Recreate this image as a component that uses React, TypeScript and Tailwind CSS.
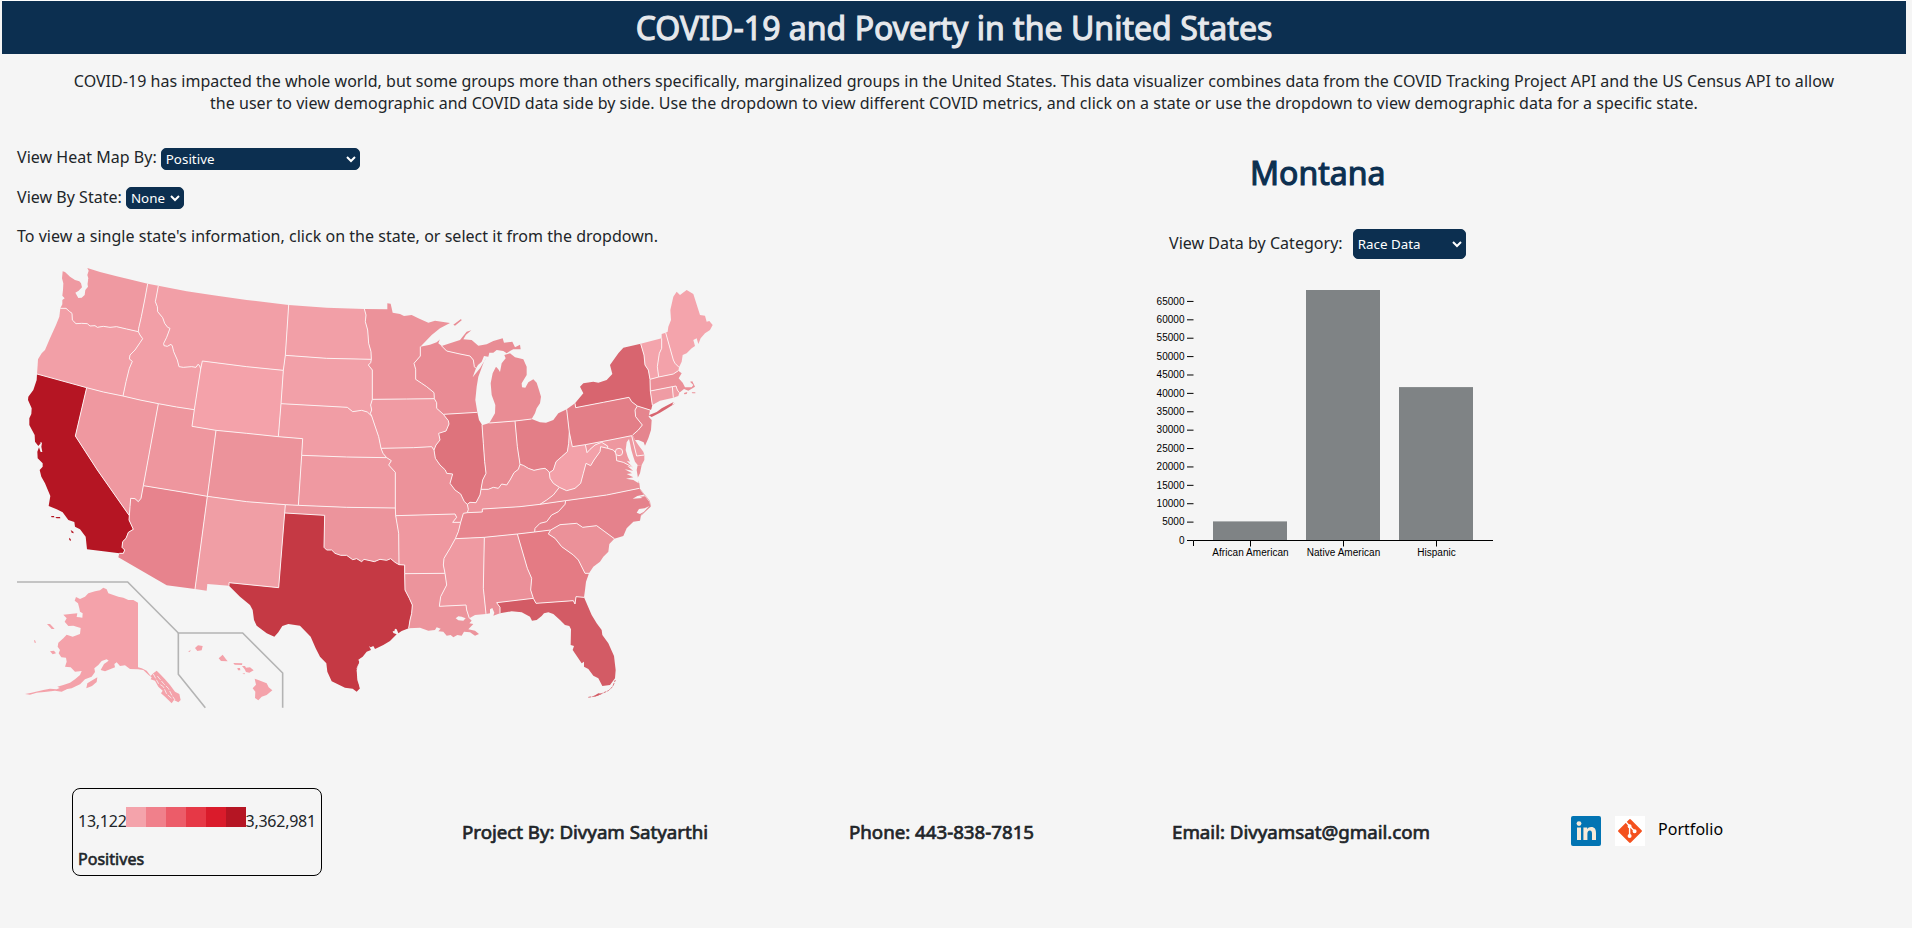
import React from "react";

/* Survey sheets: every sheet is drawn at three units per pixel from its own origin. */
const SHEETS: Record<string, [number, number]> = {
  W: [0, 250],
  N: [280, 250],
  SW: [0, 470],
  S: [220, 470],
  NE: [460, 270],
  SE: [440, 470],
};

/* Shared boundaries; each is written once and used by the states on both sides. */
const ARCS: Record<string, string> = {
  waid: "W 443,101 434,150 424,200 416,235 415,245",
  wac: "W 443,101 400,91 350,79 300,66 262,54 266,62 262,75 265,85 262,100 264,110 256,120 254,135 245,143 235,144 226,128 236,122 246,112 243,100 238,94 225,90 210,80 195,66 188,64 186,85 190,100 189,120 187,137 194,145 187,150 187,163 181,175",
  waor: "W 181,175 198,175 208,184 216,190 217,210 228,221 245,220 262,221 270,228 285,227 292,232 310,229 330,232 350,230 380,237 415,245",
  orid: "W 415,245 420,255 428,266 420,278 405,300 390,315 388,327 397,334 388,355 378,395 369,438",
  orc: "W 181,175 178,200 168,225 150,265 135,300 125,310 114,328 113,345 111,372",
  orca: "W 111,372 180,391 260,413",
  ornv: "W 260,413 310,426 369,438",
  idnv: "W 369,438 420,450 475,461",
  idut: "W 475,461 530,471 583,479",
  idwy: "W 583,479 592,420 602,357",
  idmt: "W 475,107 470,135 466,155 472,170 473,185 488,203 494,220 503,232 510,235 500,262 491,280 492,287 502,289 513,283 517,288 521,305 532,330 537,350 550,352 575,350 588,352 594,343 599,347 602,357",
  idn: "W 443,101 475,107",
  mtn: "W 475,107 560,124 640,136 740,150 866,165",
  mtwy: "W 602,357 607,333 740,350 850,361",
  mtnd: "W 866,165 861,240 856,316",
  mtsd: "W 856,316 850,361",
  wysd: "W 850,361 843,461",
  wyne: "W 843,461 835,560",
  wyut: "W 583,479 576,529 648,541",
  wyco: "W 648,541 740,550 835,560",
  neco: "W 835,560 908,566 905,616",
  ksco: "W 905,616 895,766",
  utco: "W 648,541 622,739",
  nvut: "W 475,461 430,707",
  utaz: "W 430,707 540,725 622,739",
  nvaz: "W 430,707 423,745 415,755 405,746 392,745 390,770 388,797",
  canv: "W 260,413 226,558 292,660 388,797",
  caaz: "W 388,797 387,810 394,825 400,838 385,847 378,865 368,875 366,892 374,900 370,910 358,910",
  cac: "W 111,372 110,390 100,420 85,440 84,450 95,475 94,492 88,505 88,525 104,555 105,575 115,588 122,580 121,576 126,578 124,590 127,606 122,606 117,592 112,605 113,625 128,640 128,650 119,660 124,680 135,700 151,738 146,768 170,778 188,787 205,810 223,816 225,830 240,838 257,860 261,898 310,904 358,910",
  azs: "SW 358,250 355,262 500,346 585,357",
  aznm: "W 622,739 585,1017",
  nms: "SW 585,357 620,362 622,342 687,347",
  nmtx: "SW 687,347 687,338 836,353 854,129",
  nmok: "SW 854,129 856,104",
  conm: "SW 622,79 740,95 856,104",
  cook: "SW 856,104 895,106",
  ksok: "S 235,106 380,112 526,114",
  oktx: "S 195,129 314,136 312,232 320,240 335,240 345,250 362,256 380,256 398,269 410,266 425,275 432,268 450,272 463,275 480,268 500,271 512,266 525,277 537,284",
  okar: "S 527,137 536,190 537,284",
  okmo: "S 526,114 527,137",
  txar: "S 537,284 554,285 554,311",
  txla: "S 554,311 555,360 568,385 577,405 575,430 570,450 566,475",
  txc: "S 566,475 545,483 535,490 530,478 525,476 523,484 518,483 520,489 530,493 510,513 490,525 465,537 460,528 452,532 447,528 453,540 440,545 428,560 415,569 418,576 410,600 412,630 420,655 410,665 398,656 375,653 335,634 322,605 319,580 300,560 287,535 272,500 240,467 205,462 187,468 175,487 163,500 140,490 110,467 102,450 98,420 90,405 60,380 27,347",
  ndsd: "N 16,316 140,325 274,328",
  ndn: "N 26,165 140,173 253,177",
  ndmn: "N 253,177 258,195 256,215 263,240 266,280 273,305 274,328",
  sdmn: "N 274,328 272,338 265,345 277,360 277,448",
  sdia: "N 277,448 272,465 275,480 271,490 275,498",
  sdne: "N 3,461 202,472 218,485 245,481 262,486 275,498",
  neia: "N 275,498 284,525 296,560 303,595",
  nemo: "N 303,595 309,610 320,623",
  neks: "N 65,616 200,621 320,623",
  ksmo: "N 320,623 334,632 326,645 346,667 346,774",
  iamo: "N 303,595 400,593 455,590 462,600",
  mnia: "N 277,448 380,447 463,446",
  mnwi: "N 421,290 421,318 402,340 407,358 407,388 425,400 440,410 462,428 463,446",
  wiia: "N 463,446 470,458 470,475 490,493",
  iail: "N 490,493 505,512 507,522 498,543 476,550 480,570 468,585 462,600",
  moil: "N 462,600 466,625 480,645 496,660 500,670 518,672 510,700 525,720 542,732 553,755 562,763",
  moky: "S 742,103 745,118 742,128",
  motn: "S 742,128 730,130 722,157",
  moar: "S 527,137 705,132 710,142 698,157 722,157",
  artn: "S 722,157 715,185 706,206",
  arms: "S 706,206 690,235 672,265 670,285 675,310",
  lams: "S 675,310 680,345 662,380 658,409 738,405 740,420 748,445",
  arla: "S 554,311 675,310",
  tnms: "S 706,206 793,202",
  msal: "S 793,202 790,355 798,432",
  tnal: "S 793,202 892,192",
  tnga: "SE 232,192 284,186",
  tnnc: "SE 284,186 285,175 300,160 320,155 335,135 355,125 375,103 377,92",
  gan: "SE 284,186 332,180",
  kytn: "S 742,128 787,126 787,117 900,110 960,103",
  tnva: "SE 300,103 377,92",
  vanc: "SE 377,92 500,75 598,55",
  mnn: "N 253,177 322,178 322,160 332,161 338,188 360,192 372,198 395,195 415,205 445,218 465,212 485,215 510,219 480,235 455,255 421,290",
  win: "N 421,290 450,284 470,277 478,270 480,266 475,280 485,288",
  wimi: "N 485,288 500,303 540,312 570,318 580,330 583,350 588,355",
  wic: "N 588,355 578,382 600,355 615,330 618,322 608,345 595,380 590,410 586,450 592,487",
  wiil: "N 490,493 592,487",
  illk: "N 592,487 597,510 606,524",
  ilin: "N 606,524 610,580 614,635 618,670 608,690 603,718",
  ilky: "N 603,718 600,735 588,758 570,757 562,763",
  miup: "N 485,288 510,280 540,270 552,255 560,245 574,241 558,254 550,268 575,270 595,287 620,283 640,273 668,265 672,278 697,275 705,292 720,284 722,298 700,298 690,303 680,310 670,303 650,300 640,308 628,308 625,320 612,318 605,335 594,345 588,355",
  milp: "NE 88,459 105,430 106,405 95,375 92,340 98,310 108,290 115,298 120,306 125,280 137,265 133,255 150,250 165,262 190,268 200,290 200,315 185,340 186,352 196,353 205,337 220,328 230,338 237,360 243,380 240,400 230,415 225,430 215,447",
  mioh: "NE 165,453 215,447",
  miin: "NE 88,459 165,453",
  inlk: "NE 66,466 88,459",
  inoh: "NE 165,453 172,530 180,583",
  inky: "NE 180,583 175,598 162,608 150,630 140,645 125,642 115,655 100,652 85,658 63,658",
  ohky: "NE 180,583 190,586 205,595 222,601 240,597 255,595 265,603 268,608",
  ohwv: "NE 268,608 280,600 288,575 305,560 322,545 326,520 328,487",
  ohpa: "NE 320,418 328,487",
  pawv: "NE 328,487 337,530 376,524",
  pamd: "NE 376,524 450,510 515,497",
  ohlk: "NE 215,447 240,457 258,458 280,450 295,430 320,418",
  palk: "NE 320,418 345,400",
  pany: "NE 345,400 347,413 430,397 507,382 515,395 532,408",
  panj: "NE 532,408 525,420 527,440 547,465 535,480 518,495",
  pade: "NE 515,497 518,495",
  nynj: "NE 532,408 570,420",
  nyn: "NE 345,400 370,370 360,350 370,340 400,335 415,338 440,330 457,312 450,285 475,250 490,233 542,221",
  nyvt: "NE 542,221 552,255 555,285 565,300 570,328",
  nyma: "NE 570,328 571,363",
  nyct: "NE 571,363 577,405",
  nyc: "NE 577,405 574,418 570,420",
  njc: "NE 570,420 566,440 575,450 573,480 565,505 555,527 551,517 535,510 525,510 518,495",
  dec: "NE 553,555 550,545 535,525 525,510 518,495",
  mdde: "NE 515,497 530,558 553,555",
  vtnh: "NE 605,205 605,235 598,250 592,290 596,321",
  vtn: "NE 542,221 605,205",
  vtma: "NE 570,328 596,321",
  nhma: "NE 596,321 640,312 655,302",
  nhn: "NE 605,205 605,192 617,188",
  nhme: "NE 617,188 640,270 645,280 657,292",
  nhc: "NE 657,292 655,302",
  mac: "NE 655,302 665,310 656,325 668,338 675,352 695,352 700,345 690,335 697,334 705,350 685,362 672,357 658,368",
  mact: "NE 571,363 637,350",
  mari: "NE 637,350 648,348 652,360 658,368",
  ctri: "NE 637,350 640,383",
  ctc: "NE 640,383 600,392 577,405",
  ric: "NE 658,368 655,378 640,383",
  mec: "NE 617,188 623,185 625,170 633,150 631,120 640,80 650,65 660,75 680,60 700,72 720,135 735,137 740,155 748,153 758,165 750,180 735,190 722,205 715,222 710,205 700,210 705,228 695,235 680,250 668,255 665,275 657,292",
  wvky: "NE 268,608 270,625 280,640 298,652",
  wvva: "NE 298,652 320,662 345,655 362,640 370,610 378,580 392,587 402,570 420,545 422,530 443,535",
  wvmd: "NE 376,524 381,548 390,538 405,525 425,517 443,528 443,535",
  mdva: "NE 443,535 460,540 468,550 470,572 490,577 515,590",
  mdc: "NE 553,555 553,570 545,585 515,590",
  vac: "NE 545,585 540,610 534,622 532,628 538,640 540,655",
  mdsh: "NE 515,590 545,585",
  kyva: "NE 298,652 280,675 260,690 240,703",
  ncc: "SE 598,55 612,75 628,95 632,110 615,125 603,135 600,152 580,155 560,175 550,198 523,206",
  ncsc: "SE 332,180 360,164 410,160 428,172 470,167 523,206",
  scga: "SE 332,180 325,192 345,205 365,230 400,255 415,270 435,310 447,310",
  scc: "SE 523,206 508,222 505,245 490,260 480,275 460,290 447,310",
  gac: "SE 447,310 438,335 435,360 432,382",
  gafl: "SE 280,385 288,400 400,392 405,402 408,380 432,382",
  alga: "SE 232,192 262,295 275,325 272,360 280,385",
  alfl: "SE 280,385 170,398 180,412 180,430",
  alc: "SE 138,432 150,430 150,418 157,414 163,428 160,437 180,430",
  msc: "S 748,445 765,435 798,432",
  lac: "S 566,475 600,473 625,482 645,480 650,472 662,476 655,484 670,485 680,497 692,495 700,502 712,495 725,497 732,485 750,487 765,497 777,492 765,482 745,478 760,462 748,460 755,452 748,445",
  flc: "SE 180,430 215,424 245,427 270,440 276,452 290,450 305,438 312,430 325,427 340,432 360,450 375,465 388,468 393,478 392,525 402,528 398,540 425,580 432,575 432,590 445,597 460,617 475,625 487,648 510,645 525,625 527,600 522,558 505,520 487,495 485,480 470,460 455,435 432,382",
};

/* [fill, boundary names]; a leading "-" walks the boundary backwards. */
const STATES: [string, string][] = [
  ["#ef99a1", "waid -waor -wac"],
  ["#f29fa7", "waor orid -ornv -orca -orc"],
  ["#b51523", "orca canv caaz -cac"],
  ["#ef98a0", "ornv idnv nvut nvaz -canv"],
  ["#f29fa7", "idn idmt -idwy -idut -idnv -orid -waid"],
  ["#f29fa7", "mtn mtnd mtsd -mtwy -idmt"],
  ["#f4a2aa", "mtwy wysd wyne -wyco -wyut idwy"],
  ["#ee969e", "idut wyut utco -utaz -nvut"],
  ["#ec939b", "wyco neco ksco -cook -conm -utco"],
  ["#e7838d", "utaz aznm -azs -caaz -nvaz"],
  ["#f09ea5", "conm -nmok -nmtx -nms -aznm"],
  ["#f29fa7", "ndn ndmn -ndsd -mtnd"],
  ["#f2a0a8", "ndsd sdmn sdia -sdne -wysd -mtsd"],
  ["#f19da5", "sdne neia nemo -neks -neco -wyne"],
  ["#ef99a1", "neks ksmo -ksok -ksco"],
  ["#ec949c", "cook ksok okmo okar -oktx nmok"],
  ["#c53944", "oktx txar txla txc nmtx"],
  ["#ec929a", "mnn mnwi -mnia -sdmn -ndmn"],
  ["#f09ba3", "mnia wiia iail -iamo -neia -sdia"],
  ["#ec929a", "iamo moil moky motn -moar -okmo -ksmo -nemo"],
  ["#ef98a0", "moar artn arms -arla -txar -okar"],
  ["#ec949c", "arla lams -lac -txla"],
  ["#e98b94", "win wimi wic -wiil -wiia -mnwi"],
  ["#de737c", "wiil illk ilin ilky -moil -iail"],
  ["#e98c94", "miup -wimi"],
  ["#e98c94", "milp -mioh -miin"],
  ["#e88a92", "inlk miin inoh inky -ilin"],
  ["#e37e87", "mioh ohlk ohpa -ohwv -ohky -inoh"],
  ["#ed959d", "-inky ohky wvky kyva -kytn -moky -ilky"],
  ["#e7858e", "kytn tnva -tnnc -tnga -tnal -tnms -artn -motn"],
  ["#ef9aa2", "tnms msal -msc -lams -arms"],
  ["#eb9099", "tnal alga alfl -alc -msal"],
  ["#e47b84", "tnga gan scga gac -gafl -alga"],
  ["#d35b65", "gafl -flc -alfl"],
  ["#eb9199", "ncsc scc -scga"],
  ["#e5828c", "vanc ncc -ncsc -gan tnnc"],
  ["#f3a1a9", "pawv wvmd -wvva -wvky ohwv"],
  ["#e98f97", "wvva mdva mdsh vac -vanc -tnva -kyva"],
  ["#ee979f", "pamd mdde mdc -mdva -wvmd"],
  ["#f09ca4", "dec -pade mdde"],
  ["#e37e87", "palk pany panj -pade -pamd -pawv -ohpa"],
  ["#e5858e", "nynj njc -panj"],
  ["#d8656f", "nyn nyvt nyma nyct nyc -nynj -pany"],
  ["#f4a4ac", "vtn vtnh -vtma -nyvt"],
  ["#f3a2aa", "nhn nhme nhc -nhma -vtnh"],
  ["#f4a4ac", "mec -nhme"],
  ["#eb9098", "vtma nhma mac -mari -mact -nyma"],
  ["#ef9ca4", "mact ctri ctc -nyct"],
  ["#f09ea6", "mari ric -ctri"],
];

const COASTAL = new Set(
  "wac orc idn mtn cac azs nms txc ndn mnn win wic illk miup milp inlk ohlk palk nyn nyc njc dec vtn nhn nhc mac ctc ric mec mdc vac mdsh ncc scc gac alc msc lac flc pade".split(" "),
);

type Pt = [number, number];

function points(text: string): Pt[] {
  let sheet = SHEETS.W;
  const out: Pt[] = [];
  for (const t of text.split(" ")) {
    if (SHEETS[t]) {
      sheet = SHEETS[t];
      continue;
    }
    const [x, y] = t.split(",").map(Number);
    out.push([sheet[0] + x / 3, sheet[1] + y / 3]);
  }
  return out;
}

const toPath = (p: Pt[]) => "M" + p.map(([x, y]) => x.toFixed(2) + "," + y.toFixed(2)).join("L");

function orient(names: string): string {
  const arcs = names.split(" ").map((n) => points(ARCS[n.replace("-", "")]));
  const dist = (a: Pt, b: Pt) => Math.hypot(a[0] - b[0], a[1] - b[1]);
  const first = arcs[0];
  const nextEnds = [arcs[1][0], arcs[1][arcs[1].length - 1]];
  const startGap = Math.min(...nextEnds.map((e) => dist(first[0], e)));
  const endGap = Math.min(...nextEnds.map((e) => dist(first[first.length - 1], e)));
  let ring: Pt[] = startGap < endGap ? [...first].reverse() : [...first];
  for (const arc of arcs.slice(1)) {
    const tail = ring[ring.length - 1];
    ring = ring.concat(dist(tail, arc[0]) <= dist(tail, arc[arc.length - 1]) ? arc : [...arc].reverse());
  }
  return toPath(ring) + "Z";
}

/* Two-boundary rings need their order taken as written. */
function ring(names: string): string {
  const list = names.split(" ");
  if (list.length > 2) return orient(names);
  return (
    toPath(
      list.flatMap((n) => {
        const p = points(ARCS[n.replace("-", "")]);
        return n[0] === "-" ? p.reverse() : p;
      }),
    ) + "Z"
  );
}

const ISLANDS: [string, string][] = [
  ["#f4a2aa", "SW 414,398 400,390 385,390 370,383 355,380 340,375 325,370 320,358 310,353 300,361 285,364 265,370 255,380 240,387 228,381 224,392 234,400 238,415 240,425 248,430 247,443 238,442 230,441 232,430 210,432 190,434 200,445 194,455 205,468 220,467 242,474 240,492 218,500 200,494 190,505 175,518 173,530 180,540 176,550 184,562 198,563 200,575 195,590 212,592 225,605 245,603 240,615 225,628 210,638 190,645 172,650 190,659 215,655 240,643 255,628 275,620 285,606 283,595 295,585 305,573 320,568 326,572 312,582 302,600 315,604 330,598 345,592 343,582 350,577 360,588 375,586 390,597 414,598 430,600 445,614 455,622 452,628 465,632 475,650 488,662 483,670 495,680 505,690 515,700 522,690 535,697 542,690 538,672 525,665 510,645 495,628 480,612 470,602 460,610 452,618 440,602 425,595 414,592"],
  ["#f4a2aa", "SW 75,672 95,668 130,660 150,656 170,658 188,650 200,658 185,665 165,662 140,665 110,668 90,674"],
  ["#f4a2aa", "SW 259,655 262,640 278,630 292,622 290,636 276,648"],
  ["#f4a2aa", "SW 141,462 150,462 164,477 155,477"],
  ["#f4a2aa", "SW 150,544 162,542 168,550 158,553"],
  ["#f4a2aa", "SW 102,511 105,511 108,518 104,518"],
  ["#f4a2aa", "SW 585,534 594,526 608,528 605,541 592,543"],
  ["#f4a2aa", "SW 564,546 572,539 570,545"],
  ["#f4a2aa", "SW 656,565 668,554 678,568 683,574 663,573"],
  ["#f4a2aa", "SW 700,579 727,580 726,585 704,584"],
  ["#f4a2aa", "SW 712,594 720,594 721,601 714,601"],
  ["#f4a2aa", "SW 726,588 735,588 738,593 750,592 761,601 748,608 738,606 734,598"],
  ["#f4a2aa", "SW 727,611 735,609 733,613"],
  ["#f4a2aa", "SW 764,626 775,630 800,640 806,652 817,661 800,675 785,680 775,691 765,684 766,665 758,655 768,644"],
  ["#b51523", "SW 153,138 162,138 163,142 155,142"],
  ["#b51523", "SW 166,141 180,141 181,145 170,145"],
  ["#b51523", "SW 212,180 220,185 221,190 215,188"],
  ["#b51523", "SW 207,203 212,207 213,213 208,210"],
  ["#d8656f", "NE 566,436 590,426 605,415 625,404 641,396 636,404 646,400 620,416 600,428 575,441"],
  ["#e98c94", "N 520,224 543,207 545,211 525,227"],
  ["#d35b65", "SE 462,678 475,670 485,671 478,675 465,680"],
  ["#eb9098", "NE 672,369 682,366 680,372 673,373"],
  ["#eb9098", "NE 695,367 706,367 706,370 697,370"],
];

const WATER = [
  "NE 507,507 500,517 497,540 503,560 510,575 500,572 518,592 502,588 519,602 494,598 516,610 500,612 520,622 498,626 520,630 536,640 534,625 530,600 533,585 525,575 520,560 514,540 510,520",
  "S 707,445 715,439 725,440 737,445 730,452 715,451",
  "SE 578,86 592,78 610,74 615,79 600,80 608,84",
  "SE 590,128 597,117 614,115 628,108 612,125 600,132",
  "W 243,66 251,53 258,56 260,72 256,86 259,98 254,104 250,92 246,90",
];

/* Narrow sounds and lagoons, drawn as thin strokes of the page colour. */
const CHANNELS = [
  "W 258,53 262,62 257,75 263,90 260,105 245,118 232,128 250,130 240,140",
  "SW 460,612 475,640 490,650 500,672 515,685",
  "SW 472,618 490,640 505,655 515,675 525,690",
  "S 424,565 411,595 415,625 421,655",
];

function UsMap() {
  return (
    <svg className="block" width="730" height="460" viewBox="0 260 730 460">
      {STATES.map(([fill, names]) => (
        <path key={names} d={ring(names)} fill={fill} />
      ))}
      {ISLANDS.map(([fill, text]) => (
        <path key={text} d={toPath(points(text)) + "Z"} fill={fill} />
      ))}
      {WATER.map((text) => (
        <path key={text} d={toPath(points(text)) + "Z"} fill="#f5f5f5" />
      ))}
      {Object.keys(ARCS)
        .filter((n) => !COASTAL.has(n))
        .map((n) => (
          <path key={n} d={toPath(points(ARCS[n]))} fill="none" stroke="#fdeff0" strokeWidth="1" strokeLinejoin="round" />
        ))}
      {CHANNELS.map((text) => (
        <path key={text} d={toPath(points(text))} fill="none" stroke="#f5f5f5" strokeWidth="0.8" strokeDasharray="5 1.5" />
      ))}
      <path d={toPath(points("SE 445,682 462,679 480,673 505,662 518,650 526,630"))} fill="none" stroke="#d35b65" strokeWidth="0.8" strokeDasharray="3 1" />
      <path d={toPath(points("SE 598,55 614,75 628,92 632,108 615,125 603,137"))} fill="none" stroke="#eba4ab" strokeWidth="0.8" />
      <circle cx="619" cy="452" r="3.7" fill="#f3a1a9" stroke="#fdeff0" />
      <path d={toPath(points("SW 51,336 383,336 535,489 728,489 848,609 848,713"))} fill="none" stroke="#b4b4b4" strokeWidth="1.6" />
      <path d={toPath(points("SW 535,489 535,613 616,713"))} fill="none" stroke="#b4b4b4" strokeWidth="1.6" />
    </svg>
  );
}

const BARS = [
  { label: "African American", x: 1213, top: 521.4 },
  { label: "Native American", x: 1306, top: 290 },
  { label: "Hispanic", x: 1399, top: 387.1 },
];

function BarChart() {
  const ticks = Array.from({ length: 14 }, (_, i) => i * 5000);
  return (
    <svg className="block" width="360" height="280" viewBox="1150 285 360 280" fontFamily="'Liberation Sans', Arial, sans-serif" fontSize="10" fill="#000">
      {BARS.map((b) => (
        <g key={b.label}>
          <rect x={b.x} y={b.top} width="74" height={540.5 - b.top} fill="#7f8385" />
          <path d={`M${b.x + 37.5},540.5v6`} stroke="#000" />
          <text x={b.x + 37.5} y="556" textAnchor="middle" letterSpacing="0.05">
            {b.label}
          </text>
        </g>
      ))}
      <path d="M1193.5,546V540.5H1493" fill="none" stroke="#000" />
      {ticks.map((t) => {
        const y = 540.5 - (t / 5000) * 18.39;
        return (
          <g key={t}>
            <path d={`M1187,${y}h6.5`} stroke="#000" />
            <text x="1184.5" y={y + 3.2} textAnchor="end">
              {t}
            </text>
          </g>
        );
      })}
    </svg>
  );
}

const selectClass = "rounded-[5px] border border-[#0c2f50] bg-[#0c2f50] text-[13.333px] text-white";
const contactClass = "mt-[31px] text-[18.72px] leading-[26px] tracking-[-0.01px] [-webkit-text-stroke:0.7px_#212529]";

export default function App() {
  return (
    <div className="h-[928px] w-full overflow-hidden bg-[#f5f5f5] font-['Noto_Sans',sans-serif] text-[16px] leading-[22px] tracking-[0.028px] text-[#212529]">
      <header className="mr-[6px] ml-[2px] flex h-[54px] items-center justify-center border-t border-white bg-[#0c2f50]">
        <h1 className="text-[32px] leading-[44px] font-normal text-[#e6e8ec] [-webkit-text-stroke:1.1px_#e6e8ec]">COVID-19 and Poverty in the United States</h1>
      </header>

      <p className="mt-[16px] h-[44px] pr-[74px] pl-[70px] text-center">
        COVID-19 has impacted the whole world, but some groups more than others specifically, marginalized groups in the United States. This data visualizer combines data from the COVID Tracking Project API and the US Census API to allow the user to view demographic and COVID data side by side. Use the dropdown to view different COVID metrics, and click on a state or use the dropdown to view demographic data for a specific state.
      </p>

      <main className="flex h-[616px]">
        <section className="w-[1150px] pt-[31px]">
          <div className="flex h-[24px] items-center gap-[4px] pl-[17px]">
            <label>View Heat Map By:</label>
            <select className={`${selectClass} mt-[3px] h-[22px] w-[199px]`}>
              <option>Positive</option>
            </select>
          </div>
          <div className="mt-[16px] flex h-[24px] items-center gap-[4px] pl-[17px]">
            <label>View By State:</label>
            <select className={`${selectClass} mt-[1px] h-[22px] w-[58px]`}>
              <option>None</option>
            </select>
          </div>
          <p className="mt-[16px] h-[24px] pl-[17px]">To view a single state's information, click on the state, or select it from the dropdown.</p>
          <div className="mt-[11px]">
            <UsMap />
          </div>
        </section>

        <section>
          <h2 className="mt-[37px] ml-[100px] h-[44px] text-[32px] leading-[44px] font-normal text-[#0c2f50] [-webkit-text-stroke:1.1px_#0c2f50]">Montana</h2>
          <div className="mt-[33px] ml-[19px] flex h-[32px] items-center gap-[10px]">
            <label className="-mt-[2px]">View Data by Category:</label>
            <select className={`${selectClass} h-[30px] w-[113px]`}>
              <option>Race Data</option>
            </select>
          </div>
          <div className="mt-[25px]">
            <BarChart />
          </div>
        </section>
      </main>

      <footer className="flex items-start pt-[58px] pl-[72px]">
        <div className="h-[88px] w-[250px] rounded-[8px] border border-black pt-[18px] pl-[5px]">
          <div className="flex h-[22px]">
            <span className="w-[47.5px] pt-[3px] tracking-[-0.25px]">13,122</span>
            <span className="h-[20px] w-[20px] bg-[#f4a3ab]" />
            <span className="h-[20px] w-[20px] bg-[#f0808b]" />
            <span className="h-[20px] w-[20px] bg-[#ec5c69]" />
            <span className="h-[20px] w-[20px] bg-[#e63846]" />
            <span className="h-[20px] w-[20px] bg-[#da1b2b]" />
            <span className="h-[20px] w-[20px] bg-[#b51523]" />
            <span className="pt-[3px] tracking-[-0.25px]">3,362,981</span>
          </div>
          <div className="mt-[19px] [-webkit-text-stroke:0.6px_#212529]">Positives</div>
        </div>
        <h3 className={`${contactClass} ml-[140px] w-[387px]`}>Project By: Divyam Satyarthi</h3>
        <h3 className={`${contactClass} w-[323px]`}>Phone: 443-838-7815</h3>
        <h3 className={`${contactClass} w-[399px]`}>Email: Divyamsat@gmail.com</h3>
        <a className="mt-[28px]">
          <svg className="block" width="30" height="30" viewBox="0 0 30 30">
            <rect width="30" height="30" rx="2" fill="#0274b3" />
            <g fill="#f6ead9">
              <circle cx="8" cy="7.6" r="2.4" />
              <path d="M6 11.4h4V24H6zM12.4 11.4h3.8v1.8c.8-1.3 2.1-2.1 4-2.1 3.6 0 4.8 2.3 4.8 5.8V24h-4v-6.3c0-1.8-.4-3.2-2.1-3.2-1.8 0-2.5 1.3-2.5 3.2V24h-4z" />
            </g>
          </svg>
        </a>
        <a className="mt-[28px] ml-[14px] bg-white">
          <svg className="block" width="30" height="30" viewBox="0 0 30 30">
            <rect x="6.2" y="6.2" width="17.6" height="17.6" rx="1.2" fill="#f4511e" transform="rotate(45 15 15)" />
            <g stroke="#fff" strokeWidth="1.4" fill="#fff">
              <path d="M10.5 5.5l4 4.500M14.600 10v10M14.600 10l5 5.300" />
              <circle cx="14.6" cy="10.2" r="1.3" />
              <circle cx="14.6" cy="20" r="1.3" />
              <circle cx="19.6" cy="15.3" r="1.3" />
            </g>
          </svg>
        </a>
        <a className="mt-[30px] ml-[13px] text-black">Portfolio</a>
      </footer>
    </div>
  );
}
